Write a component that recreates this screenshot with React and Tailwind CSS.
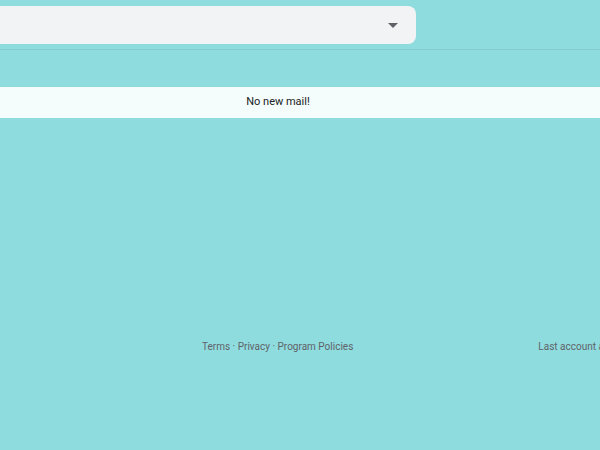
export default function App() {
  return (
    <div className="h-[450px] w-[600px] overflow-hidden bg-[#8fdcdf] font-['Roboto',sans-serif]">
      <header className="flex h-[50px] items-start border-b border-[#85ccd0] pt-[6px]">
        <div className="flex h-[38px] w-[416px] items-center justify-end rounded-r-lg bg-[#f1f3f4] pr-[18px]">
          <svg width="10" height="5" viewBox="0 0 10 5">
            <path d="M0 0 L10 0 L5 5 Z" fill="#5f6368" />
          </svg>
        </div>
      </header>
      <div className="mt-[37px] flex h-[31px] w-full items-center justify-center bg-[#f4fdfc] pr-[44px] text-[11px] text-[#202124]">
        No new mail!
      </div>
      <footer className="mt-[221px] flex whitespace-nowrap text-[10px] text-[#5f6368]">
        <div className="ml-[202px] shrink-0">Terms · Privacy · Program Policies</div>
        <div className="ml-[185px] shrink-0">Last account activity: 0 minutes ago</div>
      </footer>
    </div>
  );
}
